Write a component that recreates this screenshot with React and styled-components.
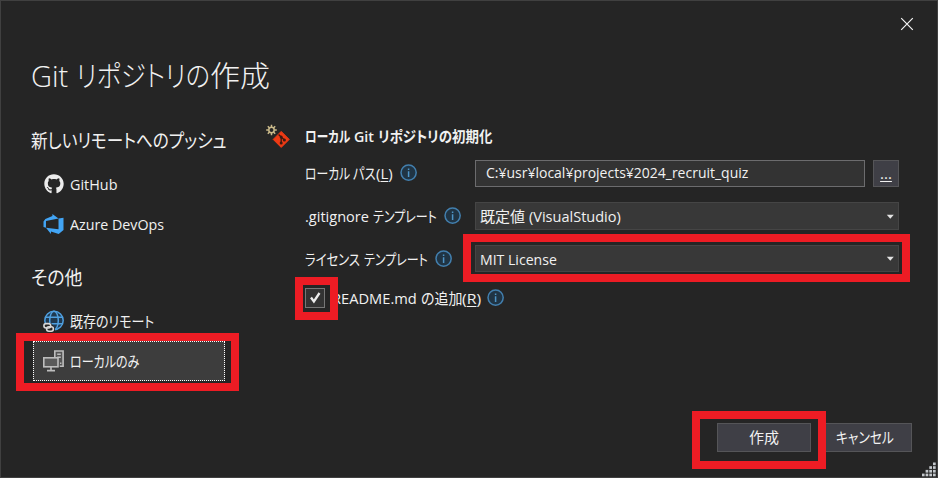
import React, { useLayoutEffect, useRef, useState } from "react";
import styled, { createGlobalStyle } from "styled-components";
import { FaGithub } from "react-icons/fa";

const Global = createGlobalStyle`
  * { box-sizing: border-box; }
  body { margin: 0; background: #252525; overflow: hidden; }
  button { font: inherit; color: inherit; padding: 0; margin: 0; }
`;

const Dialog = styled.main`
  position: relative;
  width: 938px;
  height: 478px;
  border: 1px solid #404040;
  background: #252525;
  color: #f1f1f1;
  font: 15px/20px "Open Sans", "Noto Sans CJK JP", sans-serif;
  font-feature-settings: "palt";
  display: flex;
  flex-direction: column;
`;

const TitleBar = styled.header`
  height: 46px;
  display: flex;
  justify-content: flex-end;
  padding: 16px 23px 0 0;
`;

const CloseButton = styled.button`
  width: 14px;
  height: 14px;
  border: 0;
  background: none;
  svg { display: block; }
`;

const Title = styled.h1`
  margin: 0;
  padding-left: 30px;
  height: 76px;
  font-size: 29px;
  line-height: 58px;
  font-weight: 300;
  white-space: nowrap;
`;

const Body = styled.div`
  display: flex;
  height: 300px;
`;

const Sidebar = styled.nav`
  width: 264px;
  padding-left: 30px;
`;

const SideHeading = styled.h2`
  margin: 0;
  height: 41px;
  font-size: 19px;
  line-height: 37px;
  font-weight: 400;
  white-space: nowrap;
`;

const SideItem = styled.div`
  width: 192px;
  height: 40px;
  margin-left: 2px;
  padding-left: 9px;
  border: 1px dotted ${(p) => (p.$selected ? "#ffffff" : "transparent")};
  background: ${(p) => (p.$selected ? "#3d3d3d" : "none")};
  display: flex;
  align-items: center;
  gap: 6px;
`;

const SideIcon = styled.span`
  flex: none;
  width: 21px;
  display: flex;
  justify-content: center;
`;

const SideGroup = styled.section`
  height: 137px;
`;

const Form = styled.section`
  flex: 1;
`;

const FormHeading = styled.h3`
  margin: 0;
  height: 36px;
  display: flex;
  align-items: flex-start;
  font-size: 15px;
  line-height: 27px;
  font-weight: 600;
  svg { flex: none; margin: 1px 13px 0 1px; }
`;

const Row = styled.div`
  height: ${(p) => p.$h}px;
  display: flex;
  align-items: flex-start;
  padding-left: 40px;
`;

const Label = styled.label`
  width: 170px;
  height: 28px;
  display: flex;
  align-items: center;
  svg { flex: none; margin-left: 7px; }
`;

const PathField = styled.div`
  width: 390px;
  height: 27px;
  margin: 1px 8px 0 0;
  padding: 0 0 1px 10px;
  line-height: 23px;
  border: 1px solid #6c6c6e;
  background: #333333;
`;

const Button = styled.button`
  width: ${(p) => p.$w}px;
  height: ${(p) => p.$h}px;
  margin-top: 1px;
  padding-bottom: 2px;
  border: 1px solid #555558;
  background: #3f3f46;
  display: flex;
  align-items: center;
  justify-content: center;
`;

const Combo = styled.div`
  width: 424px;
  height: ${(p) => p.$h}px;
  border: 1px solid #454545;
  background: #383838;
  display: flex;
  align-items: center;
  justify-content: space-between;
  padding: 0 4px;
`;

const Check = styled.span`
  width: 20px;
  height: 20px;
  border: 1px solid #777;
  background: #333;
  margin-right: 7px;
  svg { display: block; }
`;

const CheckLabel = styled.label`
  height: 20px;
  display: flex;
  align-items: center;
  svg { flex: none; margin-left: 6px; }
`;

const Footer = styled.footer`
  display: flex;
  justify-content: flex-end;
  gap: 7px;
  padding-right: 25px;
  margin-top: -1px;
`;

const Grip = styled.svg`
  position: absolute;
  right: 0;
  bottom: 0;
`;

const Highlight = styled.div`
  position: absolute;
  left: ${(p) => p.$x - 1}px;
  top: ${(p) => p.$y - 1}px;
  width: ${(p) => p.$w}px;
  height: ${(p) => p.$h}px;
  border: 8px solid #ed1c24;
  pointer-events: none;
`;

const FitBox = styled.span`
  display: inline-block;
  flex: none;
  width: ${(p) => p.$w}px;
  margin-left: ${(p) => p.$ml || 0}px;
  white-space: nowrap;
`;

const FitInner = styled.span`
  display: inline-block;
  transform-origin: 0 50%;
`;

const Access = styled.span`
  text-decoration: underline;
  text-decoration-thickness: 1px;
  text-underline-offset: 2px;
`;

/* Condenses or widens a run of text to a fixed advance width. */
function Fit({ w, ml, children }) {
  const ref = useRef(null);
  const [scale, setScale] = useState(1);
  useLayoutEffect(() => {
    setScale(w / ref.current.offsetWidth);
  }, [w]);
  return (
    <FitBox $w={w} $ml={ml}>
      <FitInner ref={ref} style={{ transform: `scaleX(${scale})` }}>
        {children}
      </FitInner>
    </FitBox>
  );
}

const Info = () => (
  <svg width="18" height="18" viewBox="0 0 18 18">
    <circle cx="8.6" cy="8.6" r="7.6" fill="#203444" stroke="#427fae" strokeWidth="1.5" />
    <path d="M8.6 4.4v1.7M8.6 7.3v5.7" stroke="#4f94c6" strokeWidth="1.5" />
  </svg>
);

const Arrow = () => (
  <svg width="8" height="5" viewBox="0 0 8 5">
    <path d="M.8 .8h7L4.3 4.8z" fill="#e4e4e4" />
  </svg>
);

const DevOps = () => (
  <svg width="21" height="20" viewBox="0 0 24 24" fill="#42a5f5">
    <path d="M0 8.877L2.247 5.91l8.405-3.416V.022l7.37 5.393L2.966 8.338v8.225L0 15.707zm24-4.45v14.651l-5.753 4.9-9.303-3.057v3.056l-5.978-7.416 15.057 1.798V5.415z" />
  </svg>
);

const Globe = () => (
  <svg width="21" height="22" viewBox="0 0 21 22" fill="none">
    <g stroke="#4f9fdf" strokeWidth="1.5">
      <circle cx="11" cy="10.5" r="9.2" fill="#1f3950" />
      <ellipse cx="11" cy="10.5" rx="4.3" ry="9.2" />
      <path d="M2.5 7.2h17M2.5 13.8h17" />
    </g>
    <path d="M0 13h8l4 5v4H0z" fill="#252525" />
    <g stroke="#d8d8d8" strokeWidth="1.6">
      <rect x="0.9" y="13.6" width="6.8" height="4.4" rx="2.2" />
      <rect x="3.6" y="16.8" width="6.8" height="4.4" rx="2.2" />
    </g>
  </svg>
);

const Computer = () => (
  <svg width="21" height="22" viewBox="0 0 21 22" fill="none" stroke="#bdbdbd" strokeWidth="1.6">
    <path d="M11.8 7V1h8.3v15.3h-3.4" fill="#555" />
    <path d="M14.2 4.3h3.6M14.2 7.3h3.6M17 13.2h1.4" />
    <rect x="0.8" y="7.8" width="14.2" height="9" fill="#5a5a5a" />
    <path d="M8 17v3.5M4 20.6h8" />
  </svg>
);

const GitBadge = () => (
  <svg width="26" height="27" viewBox="0 0 26 27">
    <path d="M15.2 7.4l8 8-8 8-8-8z" fill="#ee3a14" stroke="#ee3a14" strokeWidth="1" strokeLinejoin="round" />
    <path d="M12.6 10.5l2.6 2.5v6M15.2 13l3 2.7" stroke="#3a1a12" strokeWidth="1.3" fill="none" />
    <circle cx="15.2" cy="19" r="1.5" fill="#3a1a12" />
    <circle cx="15.2" cy="13" r="1.5" fill="#3a1a12" />
    <circle cx="18.4" cy="16" r="1.5" fill="#3a1a12" />
    <circle cx="5.5" cy="6" r="5.2" fill="#252525" />
    <g transform="translate(-.5 -.5)" stroke="#c9b98a" strokeWidth="1.5" fill="none">
      <circle cx="6" cy="6.5" r="2.7" />
      <path d="M6 1.2v2.4M6 9.4v2.4M.7 6.5h2.4M8.9 6.5h2.4M2.3 2.8l1.7 1.7M8 8.5l1.7 1.7M9.7 2.8L8 4.5M4 8.5l-1.7 1.7" />
    </g>
  </svg>
);

const gripDots = [0, 1, 2, 3].flatMap((r) =>
  Array.from({ length: r + 1 }, (_, i) => [11 - i * 3.7, 0.5 + r * 3.7])
);

export default function App() {
  return (
    <>
      <Global />
      <Dialog>
        <TitleBar>
          <CloseButton aria-label="閉じる">
            <svg width="14" height="14" viewBox="0 0 14 14">
              <path d="M1.2 1.2l11.6 11.6M12.8 1.2L1.2 12.8" stroke="#f4f4f4" strokeWidth="1.2" />
            </svg>
          </CloseButton>
        </TitleBar>
        <Title>
          <Fit w={37}>Git</Fit>
          <Fit w={134} ml={8}>リポジトリの</Fit>
          <Fit w={60}>作成</Fit>
        </Title>
        <Body>
          <Sidebar>
            <SideGroup>
              <SideHeading><Fit w={196}>新しいリモートへのプッシュ</Fit></SideHeading>
              <SideItem><SideIcon><FaGithub size={20} color="#ececec" /></SideIcon><Fit w={47}>GitHub</Fit></SideItem>
              <SideItem><SideIcon><DevOps /></SideIcon><Fit w={94}>Azure DevOps</Fit></SideItem>
            </SideGroup>
            <SideGroup>
              <SideHeading><Fit w={51}>その他</Fit></SideHeading>
              <SideItem><SideIcon><Globe /></SideIcon><Fit w={84}>既存のリモート</Fit></SideItem>
              <SideItem $selected><SideIcon><Computer /></SideIcon><Fit w={69}>ローカルのみ</Fit></SideItem>
            </SideGroup>
          </Sidebar>
          <Form>
            <FormHeading>
              <GitBadge />
              <Fit w={45}>ローカル</Fit>
              <Fit w={20} ml={4}>Git</Fit>
              <Fit w={114} ml={4}>リポジトリの初期化</Fit>
            </FormHeading>
            <Row $h={43}>
              <Label>
                <Fit w={45}>ローカル</Fit>
                <Fit w={23} ml={3}>パス</Fit>
                <Fit w={17}>(<Access>L</Access>)</Fit>
                <Info />
              </Label>
              <PathField><Fit w={262}>C:¥usr¥local¥projects¥2024_recruit_quiz</Fit></PathField>
              <Button $w={26} $h={27}><Access>...</Access></Button>
            </Row>
            <Row $h={43}>
              <Label>
                <Fit w={64}>.gitignore</Fit>
                <Fit w={64} ml={4}>テンプレート</Fit>
                <Info />
              </Label>
              <Combo $h={28}>
                <span><Fit w={45}>既定値</Fit><Fit w={92} ml={4}>(VisualStudio)</Fit></span>
                <Arrow />
              </Combo>
            </Row>
            <Row $h={43}>
              <Label>
                <Fit w={55}>ライセンス</Fit>
                <Fit w={64} ml={4}>テンプレート</Fit>
                <Info />
              </Label>
              <Combo $h={27}><Fit w={77}>MIT License</Fit><Arrow /></Combo>
            </Row>
            <Row $h={60}>
              <Check>
                <svg width="18" height="18" viewBox="0 0 18 18">
                  <path d="M5 8.5l2.9 4 5.6-8.5" fill="none" stroke="#ececec" strokeWidth="2.3" />
                </svg>
              </Check>
              <CheckLabel>
                <Fit w={85}>README.md</Fit>
                <Fit w={41} ml={4}>の追加</Fit>
                <Fit w={19}>(<Access>R</Access>)</Fit>
                <Info />
              </CheckLabel>
            </Row>
          </Form>
        </Body>
        <Footer>
          <Button $w={94} $h={29}><Fit w={30}>作成</Fit></Button>
          <Button $w={94} $h={29}><Fit w={58}>キャンセル</Fit></Button>
        </Footer>
        <Grip width="15" height="15" viewBox="0 0 15 15">
          {gripDots.map(([x, y]) => (
            <rect key={`${x}-${y}`} x={x} y={y} width="2.7" height="2.7" fill="#c4c8cc" />
          ))}
        </Grip>
        <Highlight $x={16} $y={333} $w={223} $h={58} />
        <Highlight $x={463} $y={234} $w={447} $h={48} />
        <Highlight $x={295} $y={277} $w={43} $h={43} />
        <Highlight $x={692} $y={411} $w={134} $h={58} />
      </Dialog>
    </>
  );
}
